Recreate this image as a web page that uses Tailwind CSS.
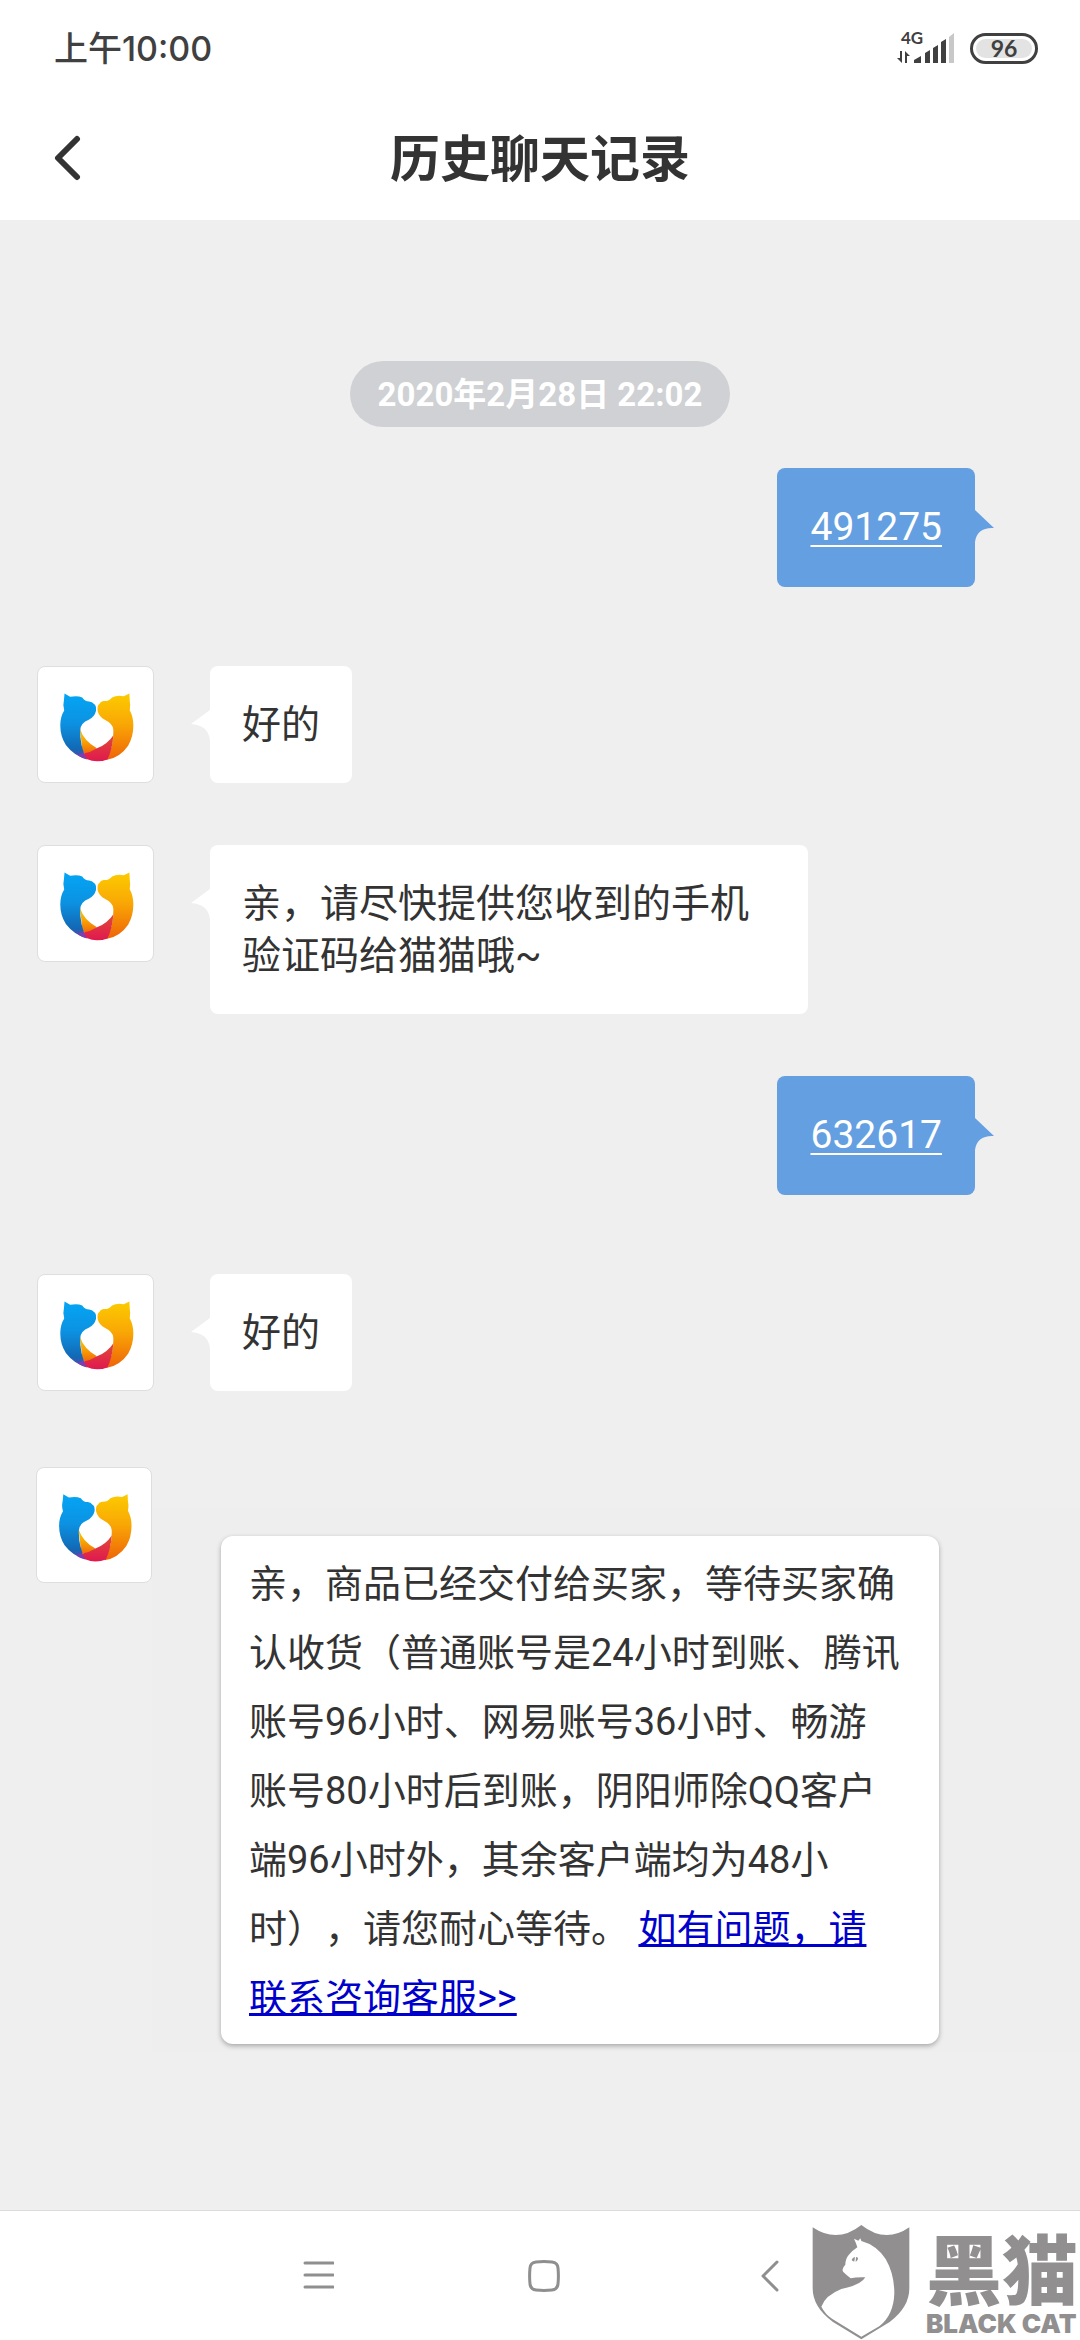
<!DOCTYPE html>
<html lang="zh-CN">
<head>
<meta charset="utf-8">
<meta name="viewport" content="width=device-width, initial-scale=1">
<title>历史聊天记录</title>
<script src="https://cdn.jsdelivr.net/npm/@tailwindcss/browser@4"></script>
</head>
<body class="flex min-h-screen flex-col bg-[#efefef] font-[Roboto,'Noto_Sans_CJK_SC',sans-serif] text-[#333]">

<!-- shared shapes -->
<svg class="absolute size-0" aria-hidden="true">
  <defs>
    <linearGradient id="blue" x1="0" y1="0" x2="0" y2="1"><stop offset="0" stop-color="#04a5f5"/><stop offset=".45" stop-color="#0c92e2"/><stop offset=".85" stop-color="#1268b4"/><stop offset="1" stop-color="#6a3fb0"/></linearGradient>
    <linearGradient id="gold" x1="0" y1="0" x2="0" y2="1"><stop offset="0" stop-color="#fccb00"/><stop offset=".45" stop-color="#f9a805"/><stop offset="1" stop-color="#ee6408"/></linearGradient>
    <linearGradient id="red" x1="0" y1="0" x2="0" y2="1"><stop offset="0" stop-color="#e04a35"/><stop offset="1" stop-color="#e01850"/></linearGradient>
    <symbol id="logo" viewBox="50 48 351 351">
      <path fill="url(#gold)" d="M329 129 L312 137 Q290 133 276 141 Q267 153 250 152 Q240 154 238 160 Q230 164 232 182 Q237 201 254 209 Q280 222 280 240 Q282 290 258 332 Q300 325 325 288 Q341 262 341 226 Q341 200 330 180 Q333 165 330 150 Z"/>
      <path fill="url(#gold)" d="M178 236 Q190 275 230 296 L205 316 L186 308 Z"/>
      <path fill="url(#blue)" d="M131 129 L148 139 Q170 134 185 141 Q193 153 206 153 Q216 154 220 160 Q229 164 227 182 Q223 199 205 209 Q180 219 179 240 Q177 285 198 329 Q160 319 135 286 Q118 260 118 226 Q118 200 130 181 Q125 165 129 150 Z"/>
      <path fill="url(#red)" d="M280 256 Q263 283 230 296 Q210 309 188 312 Q190 322 198 329 Q215 336 230 336 Q248 336 262 330 Q277 300 280 256 Z"/>
      <path fill="#7b3fb2" d="M172 318 Q180 310 189 312 Q196 322 199 330 Q183 326 172 318 Z"/>
    </symbol>
  </defs>
</svg>

<header class="bg-white">
  <div class="flex h-24 items-center justify-between pl-[54px] pr-[42px] pt-px text-[#404040]">
    <time class="font-[Inter,'Noto_Sans_CJK_SC',sans-serif] text-[34px] font-medium leading-10">上午10:00</time>
    <div class="flex items-center gap-4">
      <svg class="h-11 w-[57px]" viewBox="0 -4 57 44" fill="#404040" role="img" aria-label="4G">
        <text x="4" y="13" font-family="Lato, sans-serif" font-weight="700" font-size="17">4G</text>
        <path d="M3 20H5V32L0 27H3ZM8 32V20L13 25H10V32Z"/>
        <path d="M17 32V29L24 25V32ZM28 32V22L33 19V32ZM36 32V17L41 14V32ZM44 32V11L49 8V32Z"/>
        <path fill="#c8c8c8" d="M52 32V6L57 2V32Z"/>
      </svg>
      <div class="flex h-[31px] w-[68px] items-center justify-center rounded-full border-3 border-[#404040] bg-white p-[3px]">
        <span class="h-full w-full rounded-full bg-[#e3e3e3] text-center font-[Lato,sans-serif] text-[23px] font-bold leading-[19px]">96</span>
      </div>
    </div>
  </div>
  <div class="grid h-[124px] grid-cols-[100px_1fr_100px] items-center">
    <button type="button" aria-label="返回" class="flex h-full items-center pl-[54px]">
      <svg class="h-12 w-7" viewBox="0 0 28 48" fill="none" stroke="#333" stroke-width="6" stroke-linecap="round" stroke-linejoin="round"><path d="M23 5L4 24L23 43"/></svg>
    </button>
    <h1 class="pt-1 text-center text-[50px] font-bold leading-[64px]">历史聊天记录</h1>
  </div>
</header>

<main class="flex flex-1 flex-col border-b border-[#dcdcdc] pt-[141px]">
  <time class="self-center rounded-full bg-[#d0d1d4] px-7 pt-[2px] text-[33px] font-bold leading-[64px] text-white">2020年2月28日 22:02</time>

  <section class="flex flex-col gap-[62px] pt-[41px]">
    <div class="mb-[17px] flex justify-end pr-[86px]">
      <div class="rounded-lg bg-[#649fe1] px-[33px] pb-[34px] pt-[33px] text-[39px] leading-[52px] text-white"><a href="#" class="underline decoration-2 underline-offset-[5px]">491275</a></div>
      <svg class="mt-10 h-9 w-[19px]" viewBox="0 0 19 36" fill="#649fe1"><path d="M0 2L19 20Q2 19 0 34Z"/></svg>
    </div>

    <div class="flex items-start pl-[37px]">
      <svg class="size-[117px] rounded-lg border border-[#dedede] bg-white"><use href="#logo"/></svg>
      <svg class="ml-[37px] mt-10 h-9 w-[19px]" viewBox="0 0 19 36" fill="#fff"><path d="M19 4L0 18Q17 19 19 34Z"/></svg>
      <p class="rounded-lg bg-white px-8 pb-8 pt-[33px] text-[39px] leading-[52px]">好的</p>
    </div>

    <div class="flex items-start pl-[37px]">
      <svg class="size-[117px] rounded-lg border border-[#dedede] bg-white"><use href="#logo"/></svg>
      <svg class="ml-[37px] mt-10 h-9 w-[19px]" viewBox="0 0 19 36" fill="#fff"><path d="M19 4L0 18Q17 19 19 34Z"/></svg>
      <p class="max-w-[598px] rounded-lg bg-white px-8 pb-8 pt-[33px] text-[39px] leading-[52px]">亲，请尽快提供您收到的手机验证码给猫猫哦~</p>
    </div>

    <div class="mb-[17px] flex justify-end pr-[86px]">
      <div class="rounded-lg bg-[#649fe1] px-[33px] pb-[34px] pt-[33px] text-[39px] leading-[52px] text-white"><a href="#" class="underline decoration-2 underline-offset-[5px]">632617</a></div>
      <svg class="mt-10 h-9 w-[19px]" viewBox="0 0 19 36" fill="#649fe1"><path d="M0 2L19 20Q2 19 0 34Z"/></svg>
    </div>

    <div class="mb-[14px] flex items-start pl-[37px]">
      <svg class="size-[117px] rounded-lg border border-[#dedede] bg-white"><use href="#logo"/></svg>
      <svg class="ml-[37px] mt-10 h-9 w-[19px]" viewBox="0 0 19 36" fill="#fff"><path d="M19 4L0 18Q17 19 19 34Z"/></svg>
      <p class="rounded-lg bg-white px-8 pb-8 pt-[33px] text-[39px] leading-[52px]">好的</p>
    </div>

    <div class="flex items-start pl-9">
      <svg class="size-[116px] shrink-0 rounded-lg border border-[#dedede] bg-white"><use href="#logo"/></svg>
      <div class="mt-[41px] flex-1 bg-[#eeeeee] pb-2 pl-[69px] pt-7">
        <p class="max-w-[718px] rounded-xl bg-white pb-[11px] pl-7 pr-9 pt-[14px] text-[38px] leading-[69px] shadow-[0_2px_5px_rgba(0,0,0,0.3)] [text-spacing-trim:space-all]">亲，商品已经交付给买家，等待买家确认收货（普通账号是24小时到账、腾讯账号96小时、网易账号36小时、畅游账号80小时后到账，阴阳师除QQ客户端96小时外，其余客户端均为48小时），请您耐心等待。 <a href="#" class="text-[#0000cc] underline decoration-3 underline-offset-2 [text-decoration-skip-ink:none]">如有问题，请联系咨询客服&gt;&gt;</a></p>
      </div>
    </div>
  </section>
</main>

<nav class="relative flex h-[129px] items-center justify-center gap-[130px] bg-white pl-2">
  <button type="button" aria-label="菜单" class="flex h-full w-24 items-center justify-center">
    <svg class="h-8 w-8" viewBox="0 0 32 32" stroke="#8f8f8f" stroke-width="3" stroke-linecap="round"><path d="M3 3H31M3 15H31M3 27H31"/></svg>
  </button>
  <button type="button" aria-label="主页" class="flex h-full w-24 items-center justify-center">
    <svg class="h-8 w-8" viewBox="0 0 32 32" fill="none" stroke="#8f8f8f" stroke-width="3"><path d="M8 2Q16 1.200 24 2Q29.500 2.500 30 8Q30.800 16 30 24Q29.500 29.500 24 30Q16 30.800 8 30Q2.500 29.500 2 24Q1.200 16 2 8Q2.500 2.500 8 2Z"/></svg>
  </button>
  <button type="button" aria-label="后退" class="flex h-full w-24 items-center justify-center">
    <svg class="h-8 w-[18px]" viewBox="0 0 18 32" fill="none" stroke="#8f8f8f" stroke-width="3" stroke-linecap="round" stroke-linejoin="round"><path d="M16 2L2 16L16 30"/></svg>
  </button>
  <div class="absolute bottom-0 right-0 flex items-start gap-4 text-[#918f8f]">
    <svg class="h-[116px] w-[98px]" viewBox="152 102 294 348" fill="#918f8f" aria-hidden="true">
      <path d="M154 112Q228 162 300 105Q372 162 444 112V295Q444 352 385 396L300 448L215 396Q154 352 154 295Z"/>
      <path fill="#fff" d="M278 146L291 152L297 145L300 153Q345 165 373 207Q399 252 399 310Q397 375 355 408L300 440L212 386Q192 373 180 350Q192 316 240 297Q300 285 312 262Q285 261 268 265Q256 256 246 246Q239 237 252 224Q252 207 262 195Q270 184 288 172Q285 160 278 146Z"/>
      <path d="M271 210Q273 202 281 201L279 214Q275 215 271 210ZM284 201L290 203Q291 211 283 216Z"/>
    </svg>
    <div class="flex w-[154px] flex-col gap-1 pt-1">
      <span class="font-['Noto_Sans_CJK_SC',sans-serif] text-[76px] font-black leading-[76px]">黑猫</span>
      <span class="whitespace-nowrap font-[Inter,sans-serif] text-[26px] font-black leading-8">BLACK CAT</span>
    </div>
  </div>
</nav>
</body>
</html>
